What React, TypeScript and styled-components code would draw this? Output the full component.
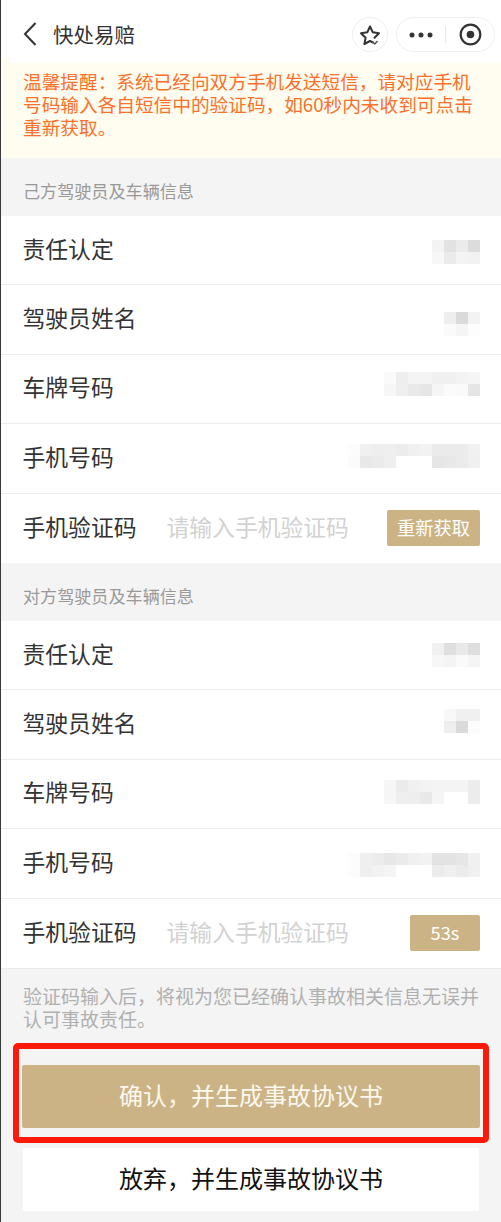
import React from 'react';
import styled, { createGlobalStyle } from 'styled-components';

const GlobalStyle = createGlobalStyle`
  html, body {
    margin: 0;
    padding: 0;
    background: #f4f4f4;
  }
  * {
    box-sizing: border-box;
  }
`;

const Page = styled.div`
  width: 501px;
  height: 1222px;
  overflow: hidden;
  border-left: 1px solid #3a3a3a;
  background: #f4f4f4;
  font-family: "Noto Sans CJK SC", "Noto Sans", sans-serif;
`;

const NavBar = styled.div`
  height: 63px;
  background: #fff;
  display: flex;
  align-items: flex-start;
  padding: 17px 6px 0 21px;
`;

const BackIcon = styled.svg`
  width: 16px;
  height: 26px;
  margin-top: 4px;
`;

const NavTitle = styled.div`
  margin-left: 15px;
  flex: 1;
  font-size: 20.5px;
  line-height: 34px;
  color: #333;
`;

const RoundButton = styled.div`
  width: 36px;
  height: 35px;
  border: 1px solid #f0f0f0;
  border-radius: 50%;
  display: flex;
  align-items: center;
  justify-content: center;
`;

const Capsule = styled.div`
  width: 99px;
  height: 35px;
  margin-left: 8px;
  border: 1px solid #f0f0f0;
  border-radius: 18px;
  display: flex;
  align-items: center;
`;

const CapsulePart = styled.div`
  flex: 1;
  height: 100%;
  display: flex;
  align-items: center;
  justify-content: center;
`;

const CapsuleDivider = styled.div`
  width: 1px;
  height: 17px;
  background: #e8e8e8;
`;

const Notice = styled.div`
  position: relative;
  height: 95px;
  background: #fffcf0;
  color: #f9712a;
  font-size: 18.66px;
  line-height: 23px;
  padding: 6px 28px 0 22px;

  &::before {
    content: '';
    position: absolute;
    left: 0;
    top: -6px;
    width: 8px;
    height: 6px;
    background: #fffcf0;
  }
`;

const SectionLabel = styled.div`
  height: 58px;
  padding: 21px 0 0 22px;
  font-size: 17.1px;
  line-height: 24px;
  color: #999;
`;

const RowList = styled.div`
  background: #fff;
`;

const Row = styled.div`
  height: 69.4px;
  display: flex;
  align-items: center;
  justify-content: space-between;
  padding: 0 21px 0 21.5px;
  border-bottom: 1px solid #ececec;

  &:last-child {
    border-bottom: none;
  }
`;

const RowLabel = styled.div`
  font-size: 22.8px;
  color: #333;
  white-space: nowrap;
  margin-top: -4px;
`;

const CodeLabel = styled(RowLabel)`
  width: 144px;
`;

const Placeholder = styled.div`
  flex: 1;
  font-size: 22.8px;
  color: #d2d2d2;
  white-space: nowrap;
  margin-top: -4px;
`;

const CodeButton = styled.div<{ $width: number }>`
  width: ${props => props.$width}px;
  height: 36px;
  background: #cbb385;
  border-radius: 2px;
  color: #fff;
  font-size: 18.3px;
  padding-bottom: 2px;
  display: flex;
  align-items: center;
  justify-content: center;
`;

const Mosaic = styled.div<{ $cols: number; $dy: number }>`
  display: grid;
  grid-template-columns: repeat(${props => props.$cols}, 12px);
  grid-auto-rows: 12px;
  margin-top: ${props => props.$dy * 2}px;
  filter: blur(0.4px);
`;

const FooterNote = styled.div`
  height: 75px;
  padding: 15px 20px 0 22px;
  border-top: 1px solid #ececec;
  font-size: 19px;
  line-height: 23px;
  color: #b0b0b0;
`;

const Highlight = styled.div`
  margin: 0 12px;
  height: 100px;
  border: 6px solid #fb1a0a;
  border-radius: 5px;
  padding: 16px 3px 0;
`;

const ActionButton = styled.div<{ $primary?: boolean }>`
  height: 63px;
  background: ${props => (props.$primary ? '#cbb385' : '#fff')};
  color: ${props => (props.$primary ? '#fdf8ee' : '#111')};
  border-radius: 2px;
  font-size: 24px;
  padding-bottom: 4px;
  display: flex;
  align-items: center;
  justify-content: center;
`;

const SecondaryWrap = styled.div`
  margin: 5px 22px 0 22px;
`;

type RowData = { label: string; dy: number; cells: string[][] };

const ownRows: RowData[] = [
  {
    label: '责任认定',
    dy: 1.5,
    cells: [
      ['f3f3f3', 'e2e2e2', 'ebebeb', 'dcdcdc'],
      ['f7f7f7', 'ebebeb', 'f4f4f4', 'f2f2f2'],
    ],
  },
  {
    label: '驾驶员姓名',
    dy: 4,
    cells: [
      ['eeeeee', 'dadada', 'f3f3f3'],
      ['fafafa', 'f5f5f5', 'fdfdfd'],
    ],
  },
  {
    label: '车牌号码',
    dy: -5,
    cells: [
      ['fafafa', 'eeeeee', 'f4f4f4', 'f4f4f4', 'f0f0f0', 'f0f0f0', 'f3f3f3', 'f5f5f5'],
      ['f6f6f6', 'efefef', 'e9e9e9', 'e6e6e6', 'f5f5f5', 'fbfbfb', 'fafafa', 'e5e5e5'],
    ],
  },
  {
    label: '手机号码',
    dy: -2,
    cells: [
      ['fcfcfc', 'f0f0f0', 'eeeeee', 'efefef', 'ececec', 'f0f0f0', 'f2f2f2', 'ebebeb', 'ebebeb', 'ebebeb', 'f1f1f1'],
      ['fbfbfb', 'e8e8e8', 'ebebeb', 'efefef', 'ffffff', 'ffffff', 'ffffff', 'e6e6e6', 'e8e8e8', 'ebebeb', 'f0f0f0'],
    ],
  },
];

const otherRows: RowData[] = [
  {
    label: '责任认定',
    dy: 0,
    cells: [
      ['f0f0f0', 'dfdfdf', 'e9e9e9', 'dedede'],
      ['f7f7f7', 'f4f4f4', 'fafafa', 'f5f5f5'],
    ],
  },
  {
    label: '驾驶员姓名',
    dy: -4,
    cells: [
      ['f8f8f8', 'f0f0f0', 'f0f0f0'],
      ['eeeeee', 'dadada', 'fcfcfc'],
    ],
  },
  {
    label: '车牌号码',
    dy: -1.5,
    cells: [
      ['f6f6f6', 'ebebeb', 'f0f0f0', 'f3f3f3', 'f4f4f4', 'f4f4f4', 'f4f4f4', 'ececec'],
      ['f6f6f6', 'efefef', 'eeeeee', 'e8e8e8', 'f5f5f5', 'ffffff', 'ffffff', 'ececec'],
    ],
  },
  {
    label: '手机号码',
    dy: 1.5,
    cells: [
      ['fcfcfc', 'efefef', 'ececec', 'e7e7e7', 'ebebeb', 'f0f0f0', 'f2f2f2', 'e3e3e3', 'e3e3e3', 'e6e6e6', 'f0f0f0'],
      ['fcfcfc', 'efefef', 'f2f2f2', 'f5f5f5', 'ffffff', 'ffffff', 'ffffff', 'ebebeb', 'efefef', 'ebebeb', 'f0f0f0'],
    ],
  },
];

// full-width punctuation
const COMMA = '\uFF0C';
const COLON = '\uFF1A';
const STOP = '\u3002';

const InfoRows: React.FC<{ rows: RowData[]; codeText: string; codeWidth: number }> = ({
  rows,
  codeText,
  codeWidth,
}) => (
  <RowList>
    {rows.map(row => (
      <Row key={row.label}>
        <RowLabel>{row.label}</RowLabel>
        <Mosaic $cols={row.cells[0].length} $dy={row.dy}>
          {row.cells.flat().map((c, i) => (
            <span key={i} style={{ background: `#${c}` }} />
          ))}
        </Mosaic>
      </Row>
    ))}
    <Row>
      <CodeLabel>手机验证码</CodeLabel>
      <Placeholder>请输入手机验证码</Placeholder>
      <CodeButton $width={codeWidth}>{codeText}</CodeButton>
    </Row>
  </RowList>
);

export default function App() {
  return (
    <Page>
      <GlobalStyle />
      <NavBar>
        <BackIcon viewBox="0 0 16 26">
          <path d="M13.500 2 3 13l10.500 11" fill="none" stroke="#333" strokeWidth="2" />
        </BackIcon>
        <NavTitle>快处易赔</NavTitle>
        <RoundButton>
          <svg width="24" height="24" viewBox="0 0 24 24">
            <path
              d="M15 19.500 12 18l-5.600 3 1.200-6.300L3 10.200l6.300-.9L12 3.500l2.800 5.800 6.200.9-4.500 4.500"
              fill="none"
              stroke="#333"
              strokeWidth="2"
              strokeLinejoin="round"
              strokeLinecap="round"
            />
            <path d="M14.500 19l2.300 2 2.700-3" fill="none" stroke="#555" strokeWidth="1.500" />
          </svg>
        </RoundButton>
        <Capsule>
          <CapsulePart>
            <svg width="24" height="6" viewBox="0 0 24 6">
              <circle cx="3" cy="3" r="2.500" fill="#333" />
              <circle cx="12" cy="3" r="2.500" fill="#333" />
              <circle cx="21" cy="3" r="2.500" fill="#333" />
            </svg>
          </CapsulePart>
          <CapsuleDivider />
          <CapsulePart>
            <svg width="23" height="23" viewBox="0 0 23 23">
              <circle cx="11.500" cy="11.500" r="9.800" fill="none" stroke="#333" strokeWidth="2.200" />
              <circle cx="11.500" cy="11.500" r="3.800" fill="#333" />
            </svg>
          </CapsulePart>
        </Capsule>
      </NavBar>
      <Notice>
        {`温馨提醒${COLON}系统已经向双方手机发送短信${COMMA}请对应手机号码输入各自短信中的验证码${COMMA}如60秒内未收到可点击重新获取${STOP}`}
      </Notice>
      <SectionLabel>己方驾驶员及车辆信息</SectionLabel>
      <InfoRows rows={ownRows} codeText="重新获取" codeWidth={93} />
      <SectionLabel>对方驾驶员及车辆信息</SectionLabel>
      <InfoRows rows={otherRows} codeText="53s" codeWidth={70} />
      <FooterNote>
        {`验证码输入后${COMMA}将视为您已经确认事故相关信息无误并认可事故责任${STOP}`}
      </FooterNote>
      <Highlight>
        <ActionButton $primary>{`确认${COMMA}并生成事故协议书`}</ActionButton>
      </Highlight>
      <SecondaryWrap>
        <ActionButton>{`放弃${COMMA}并生成事故协议书`}</ActionButton>
      </SecondaryWrap>
    </Page>
  );
}
